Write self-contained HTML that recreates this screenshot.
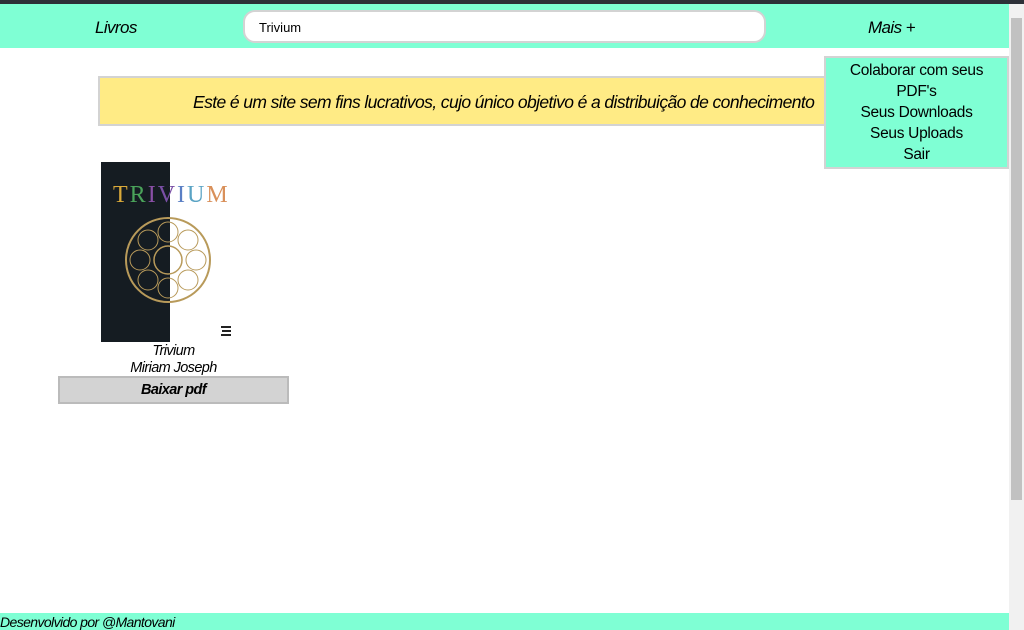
<!DOCTYPE html>
<html><head><meta charset="utf-8"><style>
*{margin:0;padding:0;box-sizing:border-box}
body{width:1024px;height:630px;overflow:hidden;background:#fff;font-family:"Liberation Sans",sans-serif;position:relative}
.top{position:absolute;left:0;top:0;width:1024px;height:4px;background:#2d3038}
.nav{position:absolute;left:0;top:4px;width:1009px;height:44px;background:#7fffd4}
.i{font-style:italic;letter-spacing:-0.6px}
.livros{position:absolute;left:95px;top:14px;font-size:17px}
.mais{position:absolute;left:868px;top:14px;font-size:17px}
.search{position:absolute;left:243px;top:6px;width:523px;height:33px;background:#fff;border:2px solid #d3d3d3;border-radius:12px;font-size:13px;padding:8px 0 0 14px}
.banner{position:absolute;left:98px;top:76px;width:730px;height:50px;background:#ffeb85;border:2px solid #d3d3d3;font-size:17.5px;padding:14px 0 0 93px;white-space:nowrap;overflow:hidden}
.menu{position:absolute;left:824px;top:56px;width:185px;height:113px;background:#7fffd4;border:2px solid #d3d3d3;font-size:15.5px;text-align:center;line-height:21px;letter-spacing:-0.3px;padding:2px 18px 0}
.menu div{margin:0 -18px;padding:0 18px}
.cover{position:absolute;left:101px;top:162px;width:131px;height:180px;background:#fff}
.cap{position:absolute;left:58px;width:231px;text-align:center;font-size:14.5px}
.btn{position:absolute;left:58px;top:376px;width:231px;height:28px;background:#d3d3d3;border:2px solid #bbb;text-align:center;font-weight:bold;font-size:14.5px;padding-top:4px}
.foot{position:absolute;left:0;top:613px;width:1009px;height:17px;background:#7fffd4;font-size:14px;padding-top:1px}
.sb{position:absolute;left:1009px;top:4px;width:15px;height:626px;background:#f1f1f1}
.th{position:absolute;left:1011px;top:18px;width:11px;height:482px;background:#c1c1c1}
</style></head><body>
<div class="top"></div>
<div class="nav">
<div class="livros i">Livros</div>
<div class="search">Trivium</div>
<div class="mais i">Mais +</div>
</div>
<div class="banner i">Este é um site sem fins lucrativos, cujo único objetivo é a distribuição de conhecimento</div>
<div class="menu"><div>Colaborar com seus PDF's</div><div>Seus Downloads</div><div>Seus Uploads</div><div>Sair</div></div>
<div class="cover">
<svg width="131" height="180" viewBox="0 0 131 180">
<rect x="0" y="0" width="69" height="180" fill="#151c22"/>
<text x="12" y="40" font-family="Liberation Serif" font-size="24" letter-spacing="2"><tspan fill="#d9a93a">T</tspan><tspan fill="#4aa35a">R</tspan><tspan fill="#8a4fa6">I</tspan><tspan fill="#7a4fa6">V</tspan><tspan fill="#5a7fc4">I</tspan><tspan fill="#5aa3c4">U</tspan><tspan fill="#d9905a">M</tspan></text>
<circle cx="67" cy="98" r="42" fill="none" stroke="#b89a5a" stroke-width="2"/>
<circle cx="67" cy="98" r="14" fill="none" stroke="#b89a5a" stroke-width="1.5"/>
<circle cx="67" cy="70" r="10" fill="none" stroke="#b89a5a"/><circle cx="67" cy="126" r="10" fill="none" stroke="#b89a5a"/>
<circle cx="39" cy="98" r="10" fill="none" stroke="#b89a5a"/><circle cx="95" cy="98" r="10" fill="none" stroke="#b89a5a"/>
<circle cx="47" cy="78" r="10" fill="none" stroke="#b89a5a"/><circle cx="87" cy="78" r="10" fill="none" stroke="#b89a5a"/>
<circle cx="47" cy="118" r="10" fill="none" stroke="#b89a5a"/><circle cx="87" cy="118" r="10" fill="none" stroke="#b89a5a"/>
<rect x="120" y="164" width="10" height="2" fill="#222"/><rect x="121" y="168" width="9" height="2" fill="#222"/><rect x="120" y="172" width="10" height="2" fill="#222"/>
</svg></div>
<div class="cap i" style="top:343px">Trivium</div>
<div class="cap i" style="top:360px">Miriam Joseph</div>
<div class="btn i">Baixar pdf</div>
<div class="foot i">Desenvolvido por @Mantovani</div>
<div class="sb"></div><div class="th"></div>
</body></html>
